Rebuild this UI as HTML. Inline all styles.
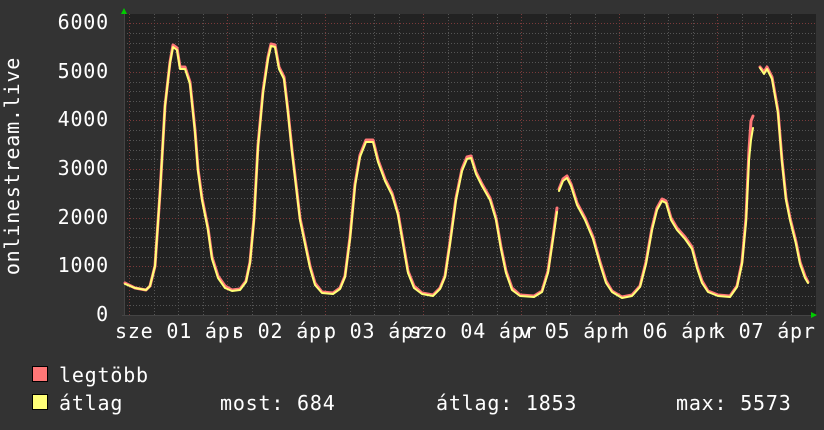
<!DOCTYPE html>
<html><head><meta charset="utf-8"><style>
html,body{margin:0;padding:0;background:#333;}
body{width:824px;height:430px;overflow:hidden;position:relative;}
svg{position:absolute;left:0;top:0;}
</style></head><body>
<svg width="824" height="430" viewBox="0 0 824 430" font-family="DejaVu Sans Mono, Liberation Mono, monospace" font-size="20" letter-spacing="0.8">
<rect x="124" y="14" width="692" height="302" fill="#222"/>
<g stroke="#555" stroke-width="1" stroke-dasharray="1,2">
<line x1="124" x2="816" y1="33.5" y2="33.5"/><line x1="124" x2="816" y1="43.5" y2="43.5"/><line x1="124" x2="816" y1="52.5" y2="52.5"/><line x1="124" x2="816" y1="62.5" y2="62.5"/>
<line x1="124" x2="816" y1="82.5" y2="82.5"/><line x1="124" x2="816" y1="91.5" y2="91.5"/><line x1="124" x2="816" y1="101.5" y2="101.5"/><line x1="124" x2="816" y1="111.5" y2="111.5"/>
<line x1="124" x2="816" y1="130.5" y2="130.5"/><line x1="124" x2="816" y1="140.5" y2="140.5"/><line x1="124" x2="816" y1="150.5" y2="150.5"/><line x1="124" x2="816" y1="159.5" y2="159.5"/>
<line x1="124" x2="816" y1="179.5" y2="179.5"/><line x1="124" x2="816" y1="189.5" y2="189.5"/><line x1="124" x2="816" y1="198.5" y2="198.5"/><line x1="124" x2="816" y1="208.5" y2="208.5"/>
<line x1="124" x2="816" y1="228.5" y2="228.5"/><line x1="124" x2="816" y1="237.5" y2="237.5"/><line x1="124" x2="816" y1="247.5" y2="247.5"/><line x1="124" x2="816" y1="257.5" y2="257.5"/>
<line x1="124" x2="816" y1="276.5" y2="276.5"/><line x1="124" x2="816" y1="286.5" y2="286.5"/><line x1="124" x2="816" y1="296.5" y2="296.5"/><line x1="124" x2="816" y1="305.5" y2="305.5"/>
<line y1="14" y2="316" x1="154.5" x2="154.5"/><line y1="14" y2="316" x1="178.5" x2="178.5"/><line y1="14" y2="316" x1="203.5" x2="203.5"/>
<line y1="14" y2="316" x1="252.5" x2="252.5"/><line y1="14" y2="316" x1="276.5" x2="276.5"/><line y1="14" y2="316" x1="301.5" x2="301.5"/>
<line y1="14" y2="316" x1="350.5" x2="350.5"/><line y1="14" y2="316" x1="374.5" x2="374.5"/><line y1="14" y2="316" x1="399.5" x2="399.5"/>
<line y1="14" y2="316" x1="448.5" x2="448.5"/><line y1="14" y2="316" x1="472.5" x2="472.5"/><line y1="14" y2="316" x1="497.5" x2="497.5"/>
<line y1="14" y2="316" x1="546.5" x2="546.5"/><line y1="14" y2="316" x1="570.5" x2="570.5"/><line y1="14" y2="316" x1="595.5" x2="595.5"/>
<line y1="14" y2="316" x1="644.5" x2="644.5"/><line y1="14" y2="316" x1="668.5" x2="668.5"/><line y1="14" y2="316" x1="693.5" x2="693.5"/>
<line y1="14" y2="316" x1="742.5" x2="742.5"/><line y1="14" y2="316" x1="766.5" x2="766.5"/><line y1="14" y2="316" x1="791.5" x2="791.5"/>
</g>
<g stroke="#7a3a3a" stroke-width="1" stroke-dasharray="1,2">
<line x1="124" x2="816" y1="23.5" y2="23.5"/><line x1="124" x2="816" y1="72.5" y2="72.5"/><line x1="124" x2="816" y1="120.5" y2="120.5"/><line x1="124" x2="816" y1="169.5" y2="169.5"/><line x1="124" x2="816" y1="218.5" y2="218.5"/><line x1="124" x2="816" y1="266.5" y2="266.5"/>
<line y1="14" y2="316" x1="129.5" x2="129.5"/><line y1="14" y2="316" x1="227.5" x2="227.5"/><line y1="14" y2="316" x1="325.5" x2="325.5"/><line y1="14" y2="316" x1="423.5" x2="423.5"/><line y1="14" y2="316" x1="521.5" x2="521.5"/><line y1="14" y2="316" x1="619.5" x2="619.5"/><line y1="14" y2="316" x1="717.5" x2="717.5"/>
</g>
<line x1="124.5" y1="12" x2="124.5" y2="316" stroke="#444"/>
<line x1="122" y1="315.5" x2="816" y2="315.5" stroke="#444"/>
<polygon points="121,14 127,14 124,8" fill="#0c0"/>
<polygon points="811,312 811,318 817,315" fill="#0c0"/>
<g fill="none" stroke-linejoin="round" stroke-linecap="round">
<polyline stroke="#f77" stroke-width="3" points="125,283 135,288 146,290 150,286 155,266 160,193 165,106 170,62 173,45 177,48 180,67 185,67 190,82 195,130 198,169 202,198 208,228 212,257 218,276 225,286 232,290 240,289 246,281 250,262 254,218 258,145 263,91 268,57 271,44 275,45 279,67 284,77 288,111 292,150 296,184 300,218 305,242 310,266 315,283 322,292 333,293 340,288 345,276 350,237 355,184 360,155 366,140 373,140 378,160 385,179 392,193 398,213 403,242 408,271 414,286 422,293 433,295 440,288 445,276 450,242 456,198 462,169 467,157 471,156 476,172 482,184 490,198 496,218 501,247 506,271 512,288 520,295 534,296 542,291 548,271 553,237 557,208"/>
<polyline stroke="#f77" stroke-width="3" points="559,189 563,179 567,176 571,184 577,203 585,218 593,237 600,262 606,281 612,291 622,297 632,295 640,286 646,262 652,228 657,208 662,199 666,201 671,218 677,228 685,237 692,247 697,266 702,281 708,291 718,295 730,296 737,286 742,262 746,218 749,150 751,121 753,116"/>
<polyline stroke="#f77" stroke-width="3" points="760,67 764,72 767,67 772,77 778,111 782,160 786,198 790,218 796,242 800,262 805,276 808,282"/>
<polyline stroke="#ff7" stroke-width="2" points="125,284 135,288 146,290 150,286 155,266 160,193 165,106 170,63 173,47 177,50 180,69 185,69 190,84 195,132 198,171 202,200 208,230 212,259 218,278 225,288 232,291 240,290 246,282 250,263 254,220 258,147 263,93 268,59 271,46 275,47 279,69 284,79 288,113 292,152 296,186 300,220 305,244 310,268 315,285 322,293 333,294 340,289 345,277 350,239 355,186 360,157 366,142 373,142 378,162 385,181 392,195 398,215 403,244 408,273 414,288 422,294 433,296 440,289 445,277 450,244 456,200 462,171 467,159 471,158 476,174 482,186 490,200 496,220 501,249 506,273 512,290 520,296 534,297 542,292 548,273 553,239 557,212"/>
<polyline stroke="#ff7" stroke-width="2" points="559,191 563,181 567,178 571,186 577,205 585,220 593,239 600,264 606,283 612,292 622,298 632,296 640,287 646,264 652,230 657,210 662,201 666,203 671,220 677,230 685,239 692,249 697,268 702,283 708,292 718,296 730,297 737,287 742,264 746,222 749,160 751,140 753,128"/>
<polyline stroke="#ff7" stroke-width="2" points="760,68 764,74 767,69 772,79 778,113 782,162 786,200 790,220 796,244 800,264 805,278 808,283"/>
</g>
<g fill="#fff" text-anchor="end">
<text x="109" y="29">6000</text><text x="109" y="78">5000</text><text x="109" y="126">4000</text><text x="109" y="175">3000</text><text x="109" y="224">2000</text><text x="109" y="272">1000</text><text x="109" y="321">0</text>
</g>
<text transform="translate(19,166) rotate(-90)" text-anchor="middle" fill="#fff">onlinestream.live</text>
<g fill="#fff">
<text x="115" y="338">sze 01 ápr</text>
<text x="232" y="338">s 02 ápr</text>
<text x="324" y="338">p 03 ápr</text>
<text x="409" y="338">szo 04 ápr</text>
<text x="519" y="338">v 05 ápr</text>
<text x="617" y="338">h 06 ápr</text>
<text x="713" y="338">k 07 ápr</text>
</g>
<rect x="32.5" y="366.5" width="15" height="15" fill="#f77" stroke="#000"/>
<rect x="32.5" y="394.5" width="15" height="15" fill="#ff7" stroke="#000"/>
<g fill="#fff">
<text x="59" y="382">legtöbb</text>
<text x="59" y="410">átlag</text>
<text x="220" y="410">most: 684</text>
<text x="436" y="410">átlag: 1853</text>
<text x="676" y="410">max: 5573</text>
</g>
</svg>
</body></html>
